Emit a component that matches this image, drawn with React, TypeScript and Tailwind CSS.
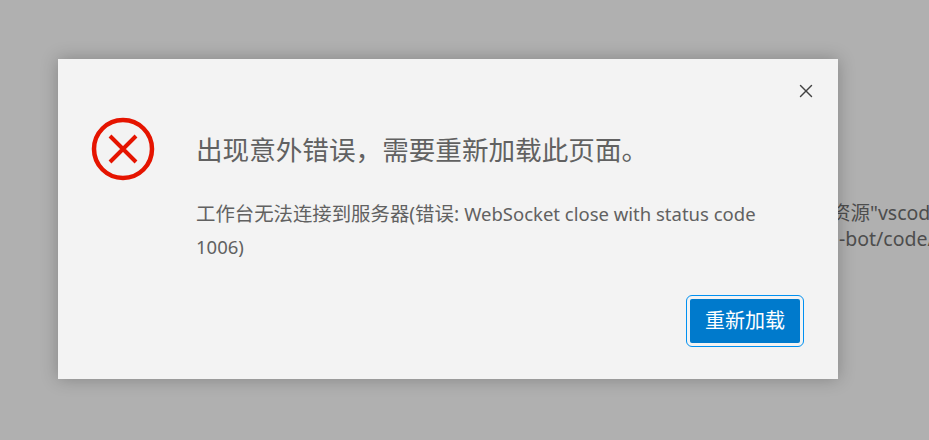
import { X } from "lucide-react";

const FONT = "font-['Noto_Sans','Noto_Sans_CJK_SC',sans-serif]";

function ErrorIcon() {
  return (
    <svg width="64" height="64" viewBox="0 0 64 64" fill="none" className="shrink-0">
      <circle cx="32" cy="32" r="29" stroke="#e51400" strokeWidth="4.5" />
      <path d="M19 19 L45 45 M45 19 L19 45" stroke="#e51400" strokeWidth="4" />
    </svg>
  );
}

export default function App() {
  return (
    <div className={`relative h-[440px] w-[929px] overflow-hidden bg-[#b0b0b0] ${FONT}`}>
      {/* page behind the modal, only its right edge shows */}
      <div className="h-full overflow-hidden pt-[200px] text-[19.5px] leading-[26px] whitespace-nowrap text-[#4d4d4d]">
        <div className="pl-[831px]">资源"vscode</div>
        <div className="pl-[839px]">-bot/code/</div>
      </div>

      <div className="absolute top-[59px] left-[58px] flex h-[320px] w-[780px] flex-col bg-[#f3f3f3] pt-[21px] pr-[21px] pb-[32px] pl-[33px] shadow-[0_0_16px_rgba(0,0,0,0.25)]">
        <div className="flex justify-end">
          <X size={22} strokeWidth={1.5} className="text-[#424242]" />
        </div>
        <div className="mt-[15px] flex flex-1 gap-[41px]">
          <ErrorIcon />
          <div className="flex-1 pr-[40px]">
            <div className="mt-[16px] text-[26.6px] leading-[34px] text-[#616161]">
              出现意外错误，需要重新加载此页面。
            </div>
            <div className="mt-[30px] text-[19.4px] leading-[33px] text-[#616161]">
              工作台无法连接到服务器(错误: <span className="text-[18.5px]">WebSocket close with status code 1006)</span>
            </div>
          </div>
        </div>
        <div className="flex justify-end pr-[13px]">
          <div className="rounded-[6px] border border-[#0090f1] p-[3px]">
            <button
              type="button"
              className="flex h-[44px] w-[110px] items-center justify-center rounded-[2px] bg-[#007acc] text-[20px] text-white"
            >
              重新加载
            </button>
          </div>
        </div>
      </div>
    </div>
  );
}
